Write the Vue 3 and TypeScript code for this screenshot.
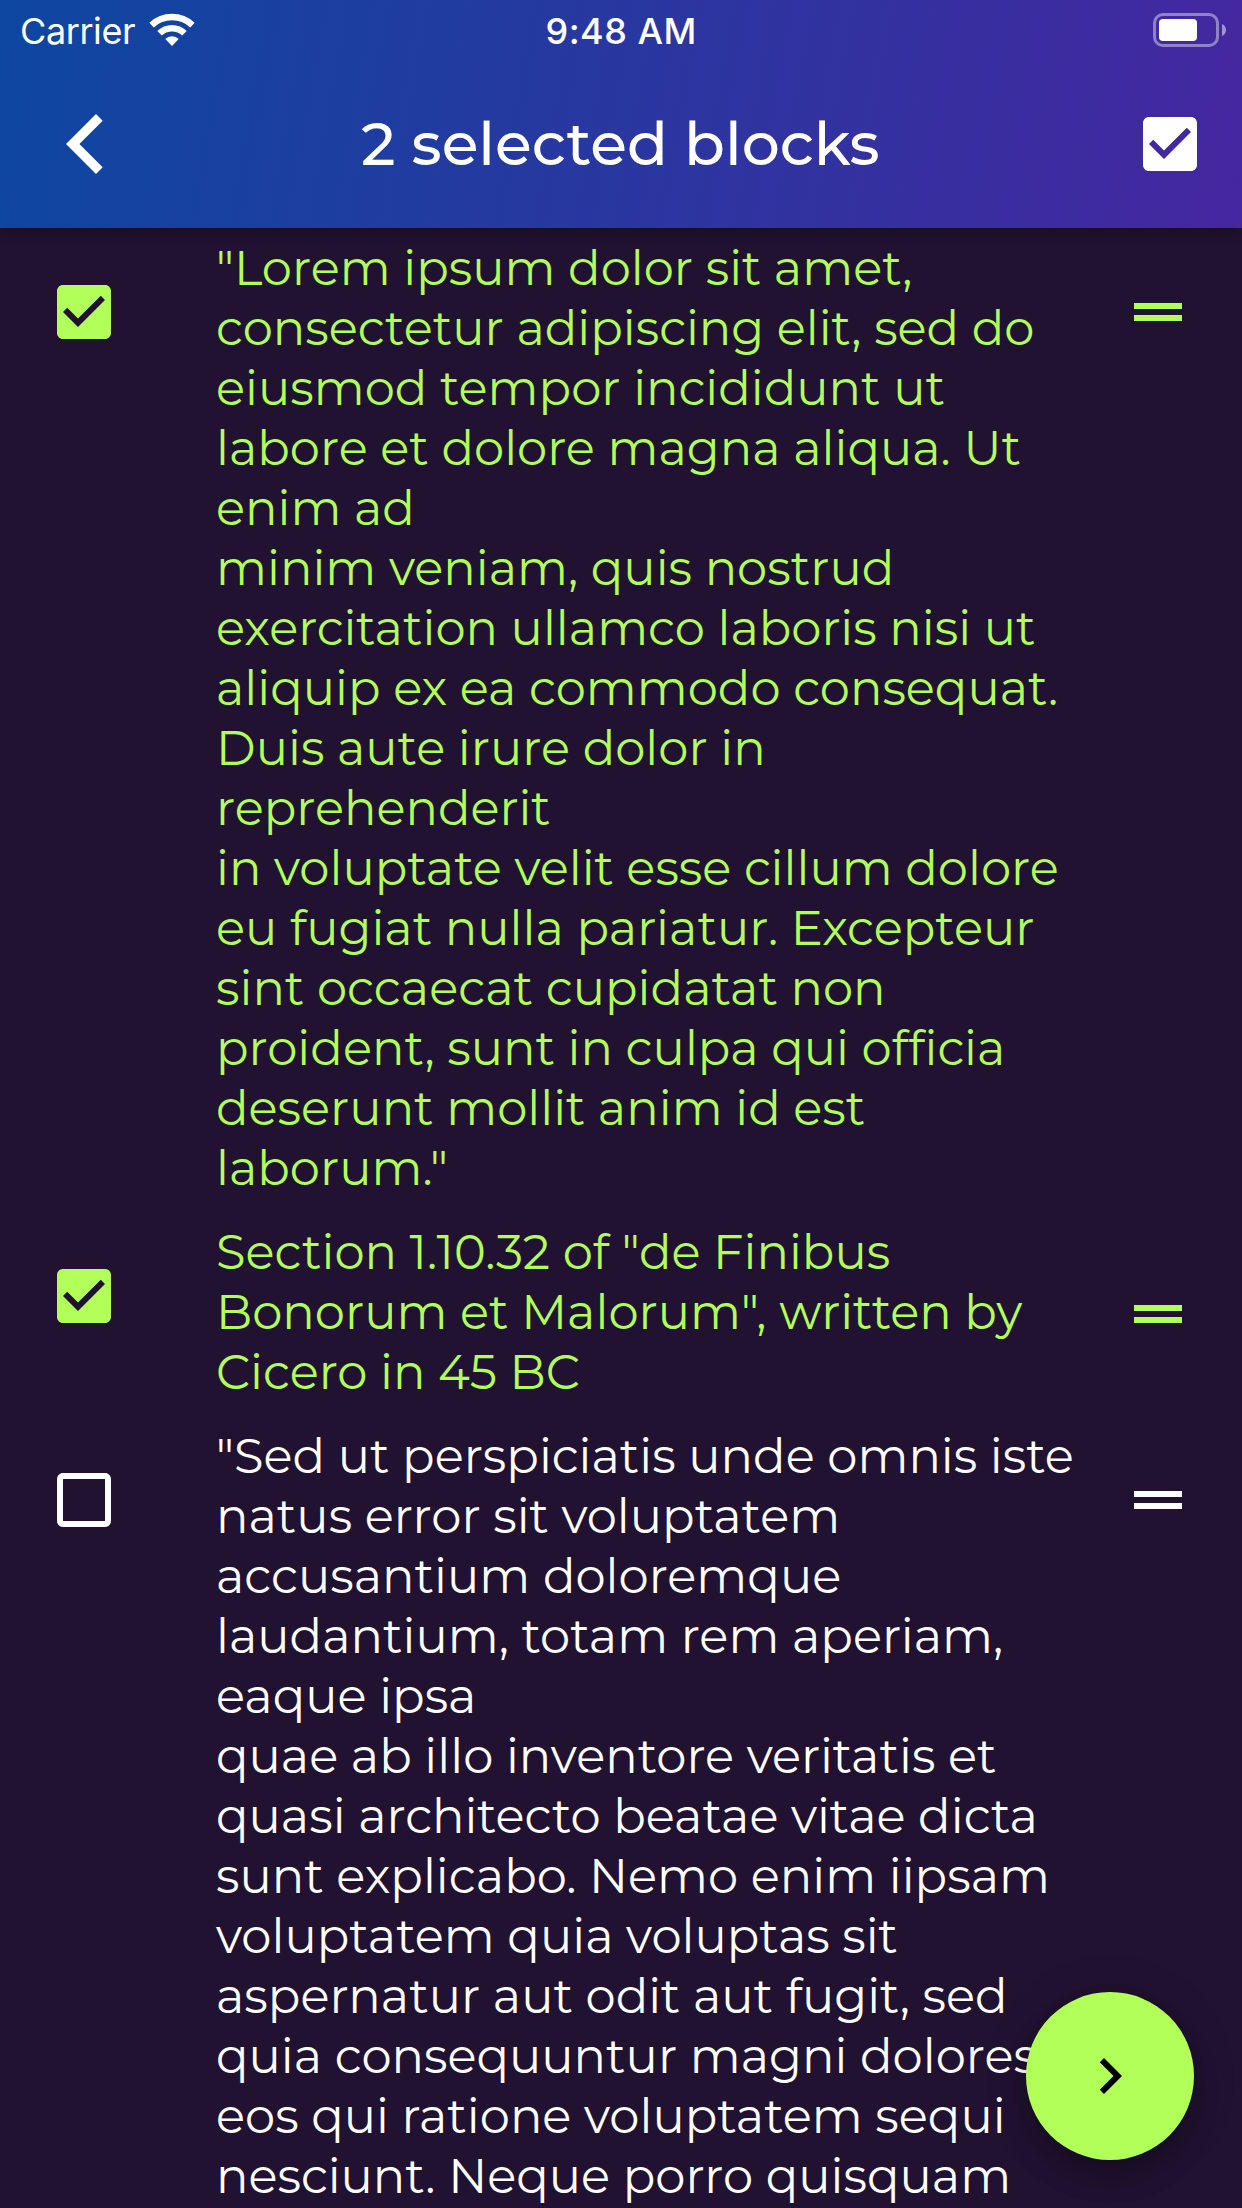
<script setup lang="ts">
interface Block {
  id: number
  selected: boolean
  short?: boolean
  lines: string[]
}

const blocks: Block[] = [
  {
    id: 1,
    selected: true,
    lines: [
      '"Lorem ipsum dolor sit amet,',
      'consectetur adipiscing elit, sed do',
      'eiusmod tempor incididunt ut',
      'labore et dolore magna aliqua. Ut',
      'enim ad',
      'minim veniam, quis nostrud',
      'exercitation ullamco laboris nisi ut',
      'aliquip ex ea commodo consequat.',
      'Duis aute irure dolor in',
      'reprehenderit',
      'in voluptate velit esse cillum dolore',
      'eu fugiat nulla pariatur. Excepteur',
      'sint occaecat cupidatat non',
      'proident, sunt in culpa qui officia',
      'deserunt mollit anim id est',
      'laborum."',
    ],
  },
  {
    id: 2,
    selected: true,
    short: true,
    lines: [
      'Section 1.10.32 of "de Finibus',
      'Bonorum et Malorum", written by',
      'Cicero in 45 BC',
    ],
  },
  {
    id: 3,
    selected: false,
    lines: [
      '"Sed ut perspiciatis unde omnis iste',
      'natus error sit voluptatem',
      'accusantium doloremque',
      'laudantium, totam rem aperiam,',
      'eaque ipsa',
      'quae ab illo inventore veritatis et',
      'quasi architecto beatae vitae dicta',
      'sunt explicabo. Nemo enim iipsam',
      'voluptatem quia voluptas sit',
      'aspernatur aut odit aut fugit, sed',
      'quia consequuntur magni dolores',
      'eos qui ratione voluptatem sequi',
      'nesciunt. Neque porro quisquam',
    ],
  },
]

// Tracks a run of text so that its last glyph ends at the given extent.
const vFit = {
  mounted(el: HTMLElement, binding: { value: number }) {
    const ctx = document.createElement('canvas').getContext('2d')
    if (!ctx) return
    const style = getComputedStyle(el)
    const text = el.textContent ?? ''
    ctx.font = `${style.fontWeight} ${style.fontSize} ${style.fontFamily}`
    const m = ctx.measureText(text)
    const bearing = m.width - m.actualBoundingBoxRight
    const ink = el.getBoundingClientRect().width - bearing
    el.style.letterSpacing = `${(binding.value - ink) / (text.length - 1)}px`
  },
}
</script>

<template>
  <div class="screen">
    <header class="app-bar">
      <div class="status">
        <div class="carrier">
          <span class="carrier-name"><span v-fit="115" class="fit">Carrier</span></span>
          <svg class="wifi" width="46" height="34" viewBox="0 0 46 34">
            <path d="M.3 9.800A33 33 0 0 1 45.700 9.800L41.200 14.400A26.500 26.500 0 0 0 4.800 14.400Z" />
            <path d="M8.300 18A21 21 0 0 1 37.700 18L33.200 22.600A14.700 14.700 0 0 0 12.800 22.600Z" />
            <path d="M16.300 26.100A9.500 9.500 0 0 1 29.700 26.100L23 33Z" />
          </svg>
        </div>
        <span class="time"><span v-fit="148" class="fit">9:48 AM</span></span>
        <div class="power">
          <svg width="76" height="36" viewBox="0 0 76 36">
            <rect x="2.500" y="2.500" width="63" height="31" rx="8.500" fill="none" stroke="#fff" stroke-opacity=".42" stroke-width="3" />
            <rect x="7" y="7" width="38" height="22" rx="4" />
            <path d="M70 12c2.700 1.300 4 3.400 4 6s-1.300 4.700-4 6z" fill-opacity=".5" />
          </svg>
        </div>
      </div>
      <div class="toolbar">
        <svg class="back" width="40" height="60" viewBox="0 0 40 60">
          <path d="M0 30L30 0L36.700 6.700L13.400 30L36.700 53.300L30 60Z" />
        </svg>
        <h1 class="title">2 selected blocks</h1>
        <svg class="select-all" width="72" height="72" viewBox="0 0 24 24">
          <path d="M19 3H5c-1.110 0-2 .9-2 2v14c0 1.100.89 2 2 2h14c1.110 0 2-.9 2-2V5c0-1.100-.89-2-2-2zm-9 14l-5-5 1.410-1.410L10 14.170l7.590-7.590L19 8l-9 9z" />
        </svg>
      </div>
    </header>

    <main class="list">
      <section
        v-for="block in blocks"
        :key="block.id"
        class="row"
        :class="{ selected: block.selected, short: block.short }"
      >
        <svg class="check" width="72" height="72" viewBox="0 0 24 24">
          <path v-if="block.selected" d="M19 3H5c-1.110 0-2 .9-2 2v14c0 1.100.89 2 2 2h14c1.110 0 2-.9 2-2V5c0-1.100-.89-2-2-2zm-9 14l-5-5 1.410-1.410L10 14.170l7.590-7.590L19 8l-9 9z" />
          <path v-else d="M19 5v14H5V5h14m0-2H5c-1.100 0-2 .9-2 2v14c0 1.100.9 2 2 2h14c1.100 0 2-.9 2-2V5c0-1.100-.9-2-2-2z" />
        </svg>
        <p class="text">
          <span v-for="(l, i) in block.lines" :key="i" class="line">{{ l }}</span>
        </p>
        <svg class="handle" width="72" height="72" viewBox="0 0 24 24">
          <path d="M20 9H4v2h16V9zM4 15h16v-2H4v2z" />
        </svg>
      </section>
    </main>

    <button class="fab" type="button" aria-label="Next">
      <svg width="72" height="72" viewBox="0 0 24 24">
        <path d="M10 6L8.590 7.410 13.170 12l-4.580 4.590L10 18l6-6z" />
      </svg>
    </button>
  </div>
</template>

<style>
body {
  margin: 0;
  background: #201230;
}
</style>

<style scoped>
.screen {
  position: relative;
  width: 1242px;
  height: 2208px;
  overflow: hidden;
  display: flex;
  flex-direction: column;
  background: #201230;
  color: #fff;
  font-family: Montserrat, Inter, 'Open Sans', sans-serif;
}

svg {
  display: block;
  flex: none;
  fill: currentColor;
}

.fit {
  display: inline-block;
  white-space: pre;
}

.app-bar {
  flex: none;
  height: 228px;
  background: linear-gradient(100.4deg, #0d47a1, #4527a0);
  box-shadow: 0 6px 12px rgba(0, 0, 0, 0.22);
}

.status {
  display: grid;
  grid-template-columns: 1fr 151px 1fr;
  height: 60px;
  font-family: Inter, sans-serif;
  font-size: 36px;
  line-height: 62px;
}

.carrier {
  display: flex;
  padding-left: 20px;
}

.carrier-name {
  width: 129px;
  font-weight: 400;
}

.wifi {
  margin-top: 13px;
}

.time {
  font-weight: 550;
}

.power {
  display: flex;
  justify-content: flex-end;
  padding: 12px 14px 0 0;
}

.toolbar {
  display: flex;
  align-items: center;
  justify-content: space-between;
  height: 168px;
  padding: 0 36px 0 66px;
}

.title {
  width: 521px;
  margin: 0 0 0 3px;
  white-space: pre;
  font-size: 60px;
  line-height: 72px;
  font-weight: 500;
}

.row {
  display: flex;
  align-items: flex-start;
  padding: 12px 48px;
}

.list {
  flex: none;
  margin-top: -2px;
}

.selected {
  color: #b2ff59;
}

.check {
  margin-top: 38px;
}

.text {
  flex: none;
  width: 906px;
  margin: 0 0 0 96px;
  font-size: 48px;
  line-height: 60px;
  font-weight: 400;
  font-variant-ligatures: none;
  letter-spacing: 0.03px;
}

.line {
  display: block;
  height: 60px;
  white-space: pre;
}

.handle {
  margin-top: 38px;
}

.short .handle {
  margin-top: 56px;
}

.fab {
  position: absolute;
  right: 48px;
  bottom: 48px;
  width: 168px;
  height: 168px;
  padding: 0;
  border: 0;
  border-radius: 50%;
  display: flex;
  align-items: center;
  justify-content: center;
  background: #b2ff59;
  color: #000;
  box-shadow:
    0 9px 15px -3px rgba(0, 0, 0, 0.16),
    0 18px 30px rgba(0, 0, 0, 0.12),
    0 3px 54px rgba(0, 0, 0, 0.08);
}
</style>
